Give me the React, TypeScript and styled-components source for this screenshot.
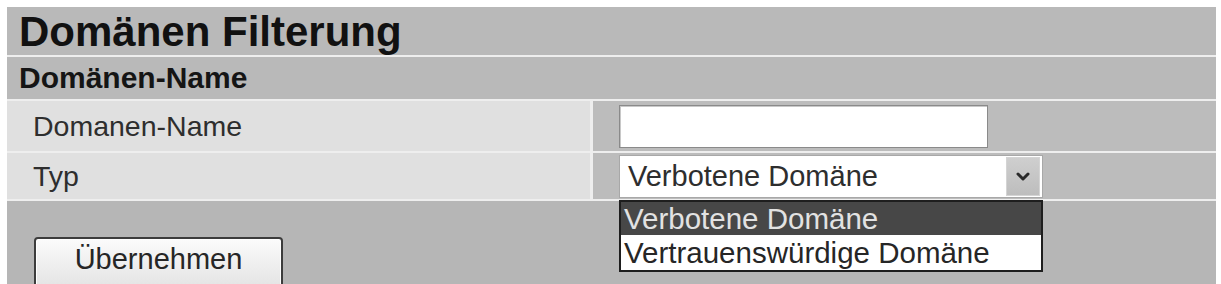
import React from "react";
import styled, { createGlobalStyle } from "styled-components";

const Global = createGlobalStyle`
  html, body { margin: 0; padding: 0; background: #ffffff; overflow: hidden; }
  body { font-family: "Liberation Sans", Arial, sans-serif; color: #222; }
`;

const Page = styled.div`
  padding: 7px 0 0 7px;
`;

const Panel = styled.div`
  width: 1209px;
  display: flex;
  flex-direction: column;
  gap: 2px;
  background: #eeeeee;
`;

const TitleBar = styled.div`
  height: 48px;
  background: #b9b9b9;
  font-weight: bold;
  font-size: 42px;
  line-height: 48px;
  padding: 1px 0 0 12px;
  box-sizing: border-box;
  color: #111;
`;

const SubTitleBar = styled.div`
  height: 42px;
  background: #b9b9b9;
  font-weight: bold;
  font-size: 30px;
  line-height: 42px;
  padding-left: 12px;
  color: #151515;
`;

const Row = styled.div<{ $h: number }>`
  display: grid;
  grid-template-columns: 583px 1fr;
  column-gap: 3px;
  height: ${(p) => p.$h}px;
`;

const LabelCell = styled.div`
  background: #e0e0e0;
  font-size: 28.5px;
  display: flex;
  align-items: center;
  padding-left: 26px;
  color: #2e2e2e;
`;

const FieldCell = styled.div`
  background: #bcbcbc;
  display: flex;
  align-items: center;
  padding-left: 26px;
  position: relative;
`;

const TextInput = styled.input`
  width: 369px;
  height: 43px;
  box-sizing: border-box;
  border: 1px solid #8a8a8a;
  box-shadow: inset 1px 1px 0 #c8c8c8;
  background: #fff;
  font-family: inherit;
  font-size: 28px;
  padding: 0 6px;
  outline: none;
`;

const SelectBox = styled.div`
  width: 424px;
  height: 43px;
  box-sizing: border-box;
  border: 1px solid #a8a8a8;
  background: #fff;
  display: flex;
  align-items: center;
  justify-content: space-between;
  padding: 0 2px 0 8px;
  font-size: 29px;
  color: #2e2e2e;
  position: relative;
`;

const ArrowButton = styled.div`
  width: 34px;
  height: 39px;
  background: linear-gradient(#cfcfcf, #bdbdbd);
  border: 1px solid #d4d4d4;
  box-sizing: border-box;
  display: flex;
  align-items: center;
  justify-content: center;
`;

const DropList = styled.div`
  position: absolute;
  left: -1px;
  top: 44px;
  width: 424px;
  box-sizing: border-box;
  border: 2px solid #1e1e1e;
  background: #fff;
  z-index: 5;
`;

const Option = styled.div<{ $active?: boolean }>`
  height: ${(p) => (p.$active ? 33 : 35)}px;
  line-height: ${(p) => (p.$active ? 33 : 35)}px;
  padding-left: 3px;
  font-size: 29.5px;
  background: ${(p) => (p.$active ? "#474747" : "#ffffff")};
  color: ${(p) => (p.$active ? "#e2e2e2" : "#262626")};
  white-space: nowrap;
`;

const Footer = styled.div`
  height: 100px;
  background: #b6b6b6;
  padding: 36px 0 0 27px;
  box-sizing: border-box;
`;

const ApplyButton = styled.button`
  width: 249px;
  height: 52px;
  border: 2px solid #3c3c3c;
  border-radius: 4px;
  background: linear-gradient(#fbfbfb, #e4e4e4);
  font-family: "Liberation Sans", Arial, sans-serif;
  font-size: 29px;
  color: #262626;
  padding: 0 0 8px 0;
  box-shadow: inset 0 0 0 1px #ffffff;
`;

const Chevron = () => (
  <svg width="16" height="11" viewBox="0 0 16 11">
    <path d="M3 3 L8 8 L13 3" fill="none" stroke="#2a2a2a" strokeWidth="3" strokeLinecap="round" strokeLinejoin="round" />
  </svg>
);

export default function App() {
  return (
    <>
      <Global />
      <Page>
        <Panel>
          <TitleBar>Domänen Filterung</TitleBar>
          <SubTitleBar>Domänen-Name</SubTitleBar>
          <Row $h={50}>
            <LabelCell>Domanen-Name</LabelCell>
            <FieldCell>
              <TextInput type="text" />
            </FieldCell>
          </Row>
          <Row $h={46}>
            <LabelCell>Typ</LabelCell>
            <FieldCell>
              <SelectBox>
                <span>Verbotene Domäne</span>
                <ArrowButton>
                  <Chevron />
                </ArrowButton>
                <DropList>
                  <Option $active>Verbotene Domäne</Option>
                  <Option>Vertrauenswürdige Domäne</Option>
                </DropList>
              </SelectBox>
            </FieldCell>
          </Row>
          <Footer>
            <ApplyButton>Übernehmen</ApplyButton>
          </Footer>
        </Panel>
      </Page>
    </>
  );
}
